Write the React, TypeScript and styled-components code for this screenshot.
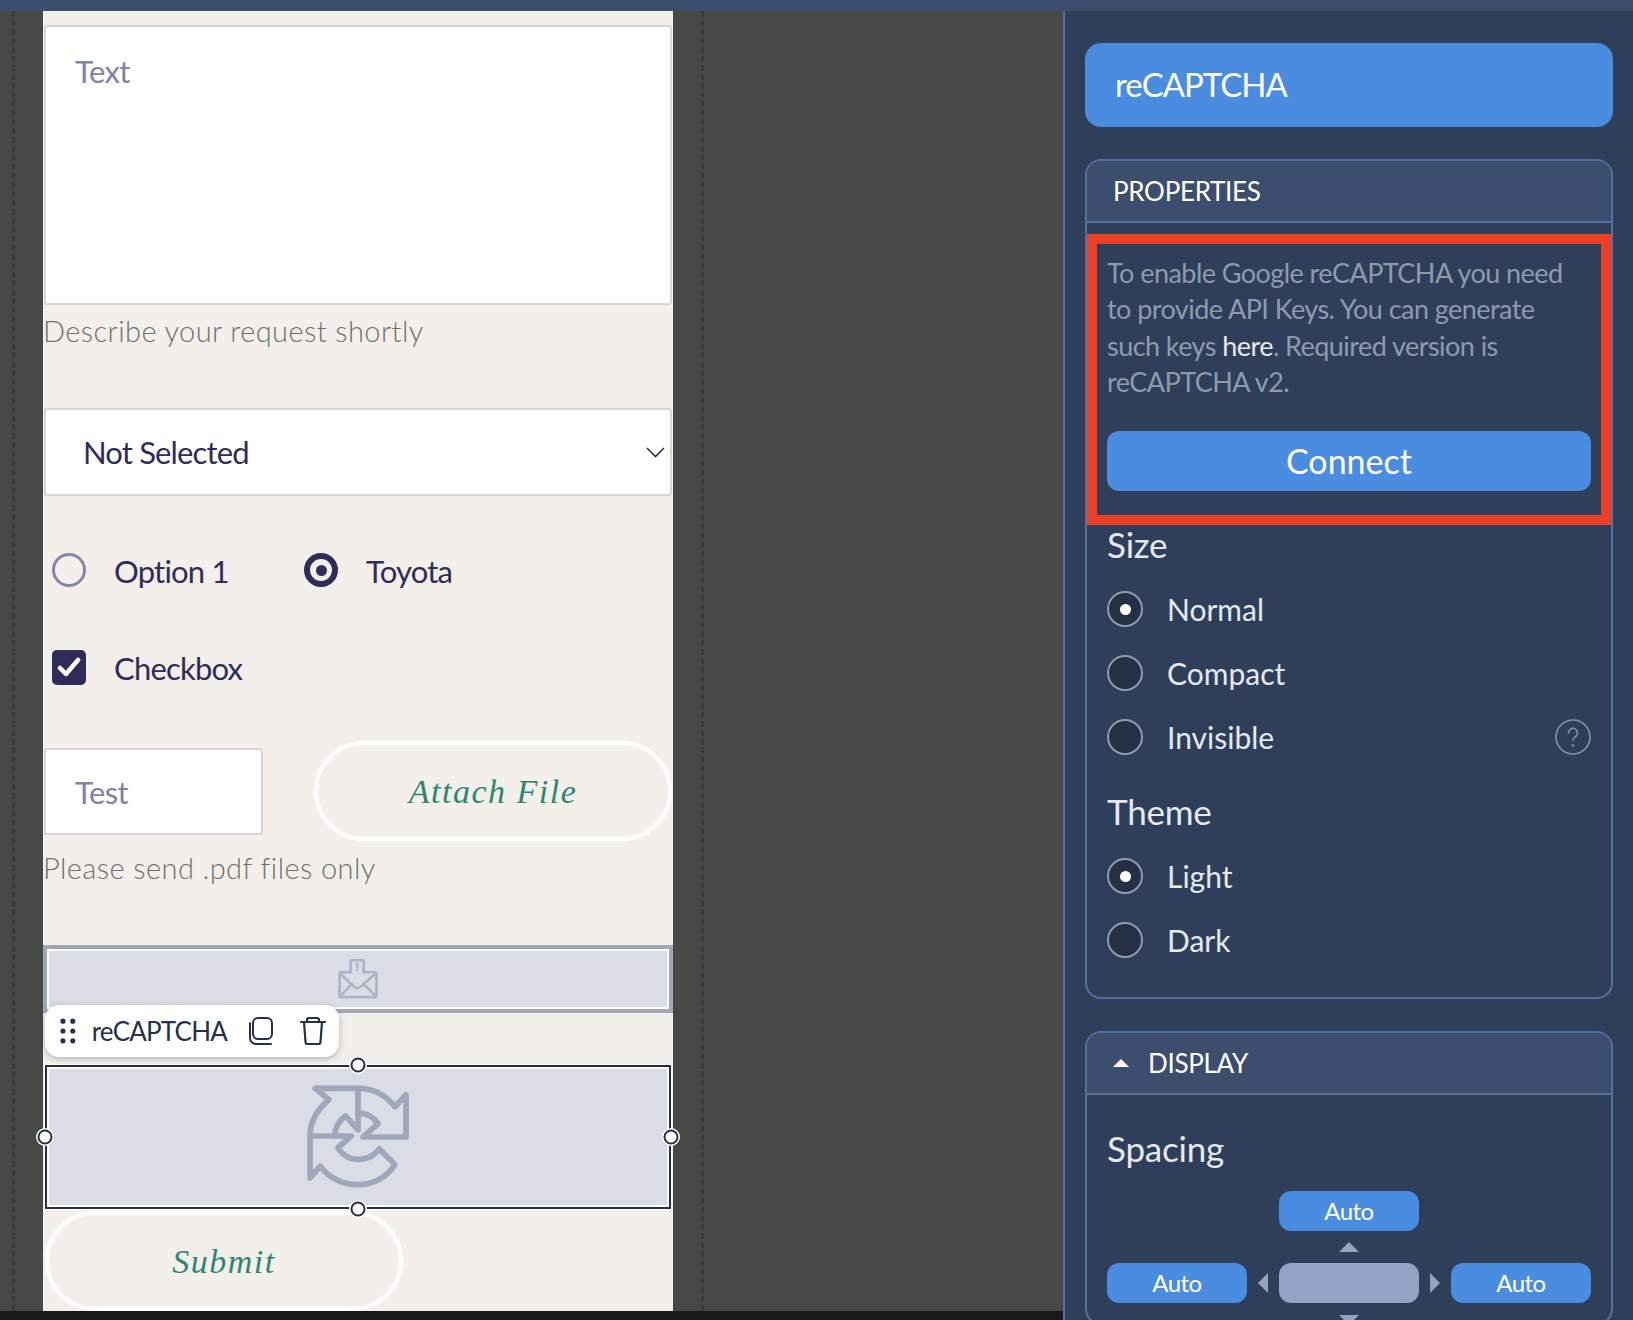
import React from "react";
import styled, { createGlobalStyle } from "styled-components";

const Global = createGlobalStyle`
  html, body { margin: 0; padding: 0; background: #484846; overflow: hidden; }
  * { box-sizing: border-box; }
  body { font-family: "Lato", "Noto Sans", sans-serif; }
`;

const Page = styled.div`
  width: 1633px;
  height: 1320px;
  display: flex;
  flex-direction: column;
  overflow: hidden;
`;
const TopBar = styled.div`
  height: 11px;
  flex: none;
  background: #3d4d6e;
`;
const Main = styled.div`
  flex: 1;
  display: flex;
  min-height: 0;
`;
const Canvas = styled.div`
  width: 1063px;
  flex: none;
  display: flex;
  flex-direction: column;
  background: #484846;
`;
const Frame = styled.div`
  height: 1300px;
  flex: none;
  margin-left: 12px;
  width: 692px;
  border-left: 3px dashed #3a3a39;
  border-right: 3px dashed #3a3a39;
  padding-left: 28px;
`;
const BottomBar = styled.div`
  flex: 1;
  background: #191919;
`;
const Form = styled.div`
  width: 630px;
  height: 1300px;
  background: #f3f0eb;
  display: flex;
  flex-direction: column;
  position: relative;
`;
const TextArea = styled.div`
  margin: 14px 1px 0;
  height: 280px;
  background: #fff;
  border: 2px solid #d5d6d9;
  border-radius: 3px;
  padding: 24px 29px;
  font-size: 31px;
  line-height: 40px;
  letter-spacing: -0.6px;
  color: #8082a8;
`;
const Helper = styled.div<{ $mt: number }>`
  margin-top: ${(p) => p.$mt}px;
  height: 36px;
  font-size: 29px;
  font-weight: 300;
  line-height: 36px;
  letter-spacing: 0.4px;
  color: #70706c;
`;
const SelectBox = styled.div`
  margin: 59px 1px 0;
  height: 88px;
  background: #fff;
  border: 2px solid #d5d6d9;
  border-radius: 3px;
  display: flex;
  align-items: center;
  justify-content: space-between;
  padding: 0 5px 0 37px;
  font-size: 31px;
  letter-spacing: -0.85px;
  color: #2f2c5a;
`;
const ChoiceRow = styled.div<{ $mt: number }>`
  margin-top: ${(p) => p.$mt}px;
  padding-left: 9px;
  display: flex;
  align-items: center;
  height: 34px;
`;
const Choice = styled.div<{ $w?: number }>`
  display: flex;
  align-items: center;
  gap: 28px;
  width: ${(p) => (p.$w ? `${p.$w}px` : "auto")};
  height: 34px;
  font-size: 31px;
  letter-spacing: -0.8px;
  color: #2f2c5a;
`;
const ChoiceLabel = styled.span`
  position: relative;
  top: 1px;
`;
const FormRadio = styled.span<{ $on?: boolean }>`
  width: 34px;
  height: 34px;
  flex: none;
  border-radius: 50%;
  border: ${(p) => (p.$on ? "6px solid #2f2c5a" : "3px solid #8486ac")};
  display: flex;
  align-items: center;
  justify-content: center;
  &::after {
    content: "";
    width: 11px;
    height: 11px;
    border-radius: 50%;
    background: ${(p) => (p.$on ? "#2f2c5a" : "transparent")};
  }
`;
const CheckMark = styled.span`
  width: 34px;
  height: 35px;
  flex: none;
  border-radius: 5px;
  background: #2f2c5a;
  display: flex;
  align-items: center;
  justify-content: center;
`;
const FileRow = styled.div`
  margin: 57px 1px 0;
  height: 100px;
  display: flex;
  align-items: center;
  justify-content: space-between;
`;
const ShortInput = styled.div`
  width: 219px;
  height: 87px;
  background: #fff;
  border: 2px solid #d5d6d9;
  border-radius: 3px;
  padding: 2px 0 0 29px;
  display: flex;
  align-items: center;
  font-size: 31px;
  letter-spacing: -0.6px;
  color: #8082a8;
`;
const PillButton = styled.div<{ $w: number }>`
  width: ${(p) => p.$w}px;
  height: 100px;
  flex: none;
  border: 4px solid #fff;
  border-radius: 50px;
  padding-top: 2px;
  display: flex;
  align-items: center;
  justify-content: center;
  font-family: "Liberation Serif", serif;
  font-style: italic;
  font-size: 34px;
  letter-spacing: 1.5px;
  color: #2f8573;
`;
const EmailBlock = styled.div`
  margin-top: 59px;
  height: 68px;
  background: #dadde6;
  border: 4px solid #a0a7bb;
  box-shadow: inset 0 0 0 2px #fff;
  display: flex;
  align-items: center;
  justify-content: center;
`;
const SelectedWrap = styled.div`
  margin: 52px 0 0 2px;
  width: 626px;
  height: 144px;
  position: relative;
`;
const SelectedBlock = styled.div`
  height: 100%;
  background: #dadde6;
  border: 2px solid #26304a;
  box-shadow: inset 0 0 0 2px #fff, 0 0 0 1px #fff;
  display: flex;
  align-items: center;
  justify-content: center;
`;
const Handle = styled.span<{ $x: string; $y: string }>`
  position: absolute;
  left: ${(p) => p.$x};
  top: ${(p) => p.$y};
  transform: translate(-50%, -50%);
  width: 15px;
  height: 15px;
  border-radius: 50%;
  background: #fff;
  border: 2.5px solid #26304a;
  box-shadow: 0 0 0 1.5px #fff;
`;
const Toolbar = styled.div`
  position: absolute;
  left: 0;
  top: -60px;
  width: 294px;
  height: 52px;
  background: #fff;
  border-radius: 14px;
  box-shadow: 0 2px 6px rgba(30, 35, 50, 0.3);
  display: flex;
  align-items: center;
  padding: 0 12px 0 15px;
  color: #26304a;
  font-size: 26px;
  letter-spacing: -0.8px;
`;
const ToolbarLabel = styled.span`
  margin-left: 16px;
  width: 159px;
`;
const ToolbarIcon = styled.svg`
  flex: none;
  fill: none;
  stroke: #26304a;
  stroke-width: 2;
  stroke-linecap: round;
  stroke-linejoin: round;
`;
const SubmitWrap = styled.div`
  margin: 2px 0 0 2px;
`;

const Side = styled.div`
  flex: 1;
  background: #2f3f5a;
  border-left: 2px solid #5570a0;
  padding: 32px 20px 0 20px;
  display: flex;
  flex-direction: column;
  color: #e4e9f3;
  overflow: hidden;
`;
const TitleBar = styled.div`
  height: 84px;
  flex: none;
  background: #4a8cdf;
  border-radius: 16px;
  color: #fff;
  display: flex;
  align-items: center;
  padding: 0 0 3px 30px;
  font-size: 33px;
  letter-spacing: -1px;
`;
const Section = styled.div<{ $mt: number; $h?: number }>`
  margin-top: ${(p) => p.$mt}px;
  flex: none;
  height: ${(p) => (p.$h ? `${p.$h}px` : "auto")};
  border: 2px solid #5570a0;
  border-radius: 16px;
`;
const SectionHead = styled.div`
  height: 62px;
  background: #3d4d6e;
  border-bottom: 2px solid #5570a0;
  border-radius: 14px 14px 0 0;
  display: flex;
  align-items: center;
  padding: 0 0 0 26px;
  font-size: 26px;
  letter-spacing: -0.3px;
  color: #fff;
`;
const Caret = styled.span`
  width: 0;
  height: 0;
  border-left: 8px solid transparent;
  border-right: 8px solid transparent;
  border-bottom: 8px solid #fff;
  margin: 0 19px 0 0;
`;
const Notice = styled.div`
  margin-top: 11px;
  height: 291px;
  border: 10.5px solid #ec3f27;
  padding: 11px 10px 0 10px;
  display: flex;
  flex-direction: column;
`;
const NoticeText = styled.div`
  max-width: 470px;
  font-size: 27px;
  line-height: 36.3px;
  letter-spacing: -0.55px;
  color: #8c9bae;
`;
const NoticeLink = styled.span`
  color: #e6e9f0;
`;
const ConnectButton = styled.div`
  margin-top: 31px;
  height: 60px;
  padding-bottom: 2px;
  background: #4a8cdf;
  border-radius: 12px;
  color: #fff;
  font-size: 34px;
  display: flex;
  align-items: center;
  justify-content: center;
`;
const Body = styled.div`
  padding: 0 20px;
`;
const GroupLabel = styled.div<{ $mt: number }>`
  margin-top: ${(p) => p.$mt}px;
  height: 42px;
  line-height: 42px;
  font-size: 35px;
  letter-spacing: -0.2px;
  color: #e4e9f3;
`;
const RadioRow = styled.div<{ $mt: number }>`
  margin-top: ${(p) => p.$mt}px;
  height: 36px;
  display: flex;
  align-items: center;
  gap: 24px;
  font-size: 30px;
  line-height: 34px;
  color: #e4e9f3;
`;
const DarkRadio = styled.span<{ $on?: boolean }>`
  width: 36px;
  height: 36px;
  flex: none;
  border-radius: 50%;
  background: #252f45;
  border: 2px solid #8c9bae;
  display: flex;
  align-items: center;
  justify-content: center;
  &::after {
    content: "";
    width: 11px;
    height: 11px;
    border-radius: 50%;
    background: ${(p) => (p.$on ? "#fff" : "transparent")};
  }
`;
const HelpIcon = styled.svg`
  margin-left: auto;
  flex: none;
  fill: none;
  stroke: #7e93b5;
`;
const SpacingGrid = styled.div`
  margin-top: 22px;
  display: grid;
  grid-template-columns: 140px 32px 140px 32px 140px;
  grid-template-rows: 40px 32px 40px 20px;
  justify-items: center;
  align-items: center;
`;
const AutoChip = styled.div<{ $col: number; $row: number; $muted?: boolean }>`
  grid-column: ${(p) => p.$col};
  grid-row: ${(p) => p.$row};
  width: 140px;
  height: 40px;
  border-radius: 12px;
  padding-bottom: 2px;
  background: ${(p) => (p.$muted ? "#93a3c3" : "#4a8cdf")};
  color: #fff;
  font-size: 24px;
  letter-spacing: -0.5px;
  display: flex;
  align-items: center;
  justify-content: center;
`;
const Arrow = styled.span<{ $col: number; $row: number; $dir: "up" | "down" | "left" | "right" }>`
  grid-column: ${(p) => p.$col};
  grid-row: ${(p) => p.$row};
  width: 0;
  height: 0;
  ${(p) =>
    p.$dir === "up" || p.$dir === "down"
      ? `border-left: 10px solid transparent; border-right: 10px solid transparent;`
      : `border-top: 10px solid transparent; border-bottom: 10px solid transparent;`}
  ${(p) => p.$dir === "up" && `border-bottom: 10px solid #93a3c3;`}
  ${(p) => p.$dir === "down" && `border-top: 10px solid #93a3c3; align-self: start; margin-top: 12px;`}
  ${(p) => p.$dir === "left" && `border-right: 10px solid #93a3c3;`}
  ${(p) => p.$dir === "right" && `border-left: 10px solid #93a3c3;`}
`;

const EnvelopeIcon = () => (
  <svg width="42" height="42" viewBox="170 55 130 128" fill="none" stroke="#aeb4c7" strokeWidth="8" strokeLinecap="round" strokeLinejoin="round">
    <path d="M212 98H182a4 4 0 0 0-4 4v69a4 4 0 0 0 4 4h106a4 4 0 0 0 4-4v-69a4 4 0 0 0-4-4h-35" />
    <path d="M212 98V66a5 5 0 0 1 5-5h31a5 5 0 0 1 5 5v32" />
    <path d="M180 102l44 42q9 7 18 0l48-42" />
    <path d="M180 172l36-37M290 172l-37-37" />
    <path d="M233 69v15M233 92v1" strokeWidth="7" />
  </svg>
);

const RecaptchaIcon = () => (
  <svg width="104" height="106" viewBox="80 435 310 316" fill="none" stroke="#a0a7bb" strokeWidth="17" strokeLinecap="round" strokeLinejoin="round">
    <path d="M108 448H235C280 448 318 468 345 503L378 467V593H250L295 553C280 532 258 522 235 522" />
    <path d="M235 448V572L198 530C178 545 166 565 165 590" />
    <path d="M108 448L148 482C115 510 92 548 92 590V715L122 680C148 715 190 735 235 735C282 735 322 712 345 675L298 628C285 648 262 660 235 660C212 660 190 648 175 625L215 590H92" />
  </svg>
);

const Dots = () => (
  <svg width="16" height="26" viewBox="0 0 16 26" fill="#26304a">
    <circle cx="3" cy="3" r="2.6" /><circle cx="13" cy="3" r="2.6" />
    <circle cx="3" cy="13" r="2.6" /><circle cx="13" cy="13" r="2.6" />
    <circle cx="3" cy="23" r="2.6" /><circle cx="13" cy="23" r="2.6" />
  </svg>
);

const CopyIcon = () => (
  <ToolbarIcon width="26" height="30" viewBox="0 0 26 30" style={{ marginRight: 25 }}>
    <rect x="5" y="2" width="19" height="21" rx="5" strokeWidth="2" />
    <path d="M2 7v15a6 6 0 0 0 6 6h15" strokeWidth="2" />
  </ToolbarIcon>
);

const TrashIcon = () => (
  <ToolbarIcon width="28" height="30" viewBox="0 0 28 30">
    <path d="M2 6h24M8 6V4a2 2 0 0 1 2-2h8a2 2 0 0 1 2 2v2M5 6l1.5 20a2 2 0 0 0 2 2h11a2 2 0 0 0 2-2L23 6" strokeWidth="2.2" />
  </ToolbarIcon>
);

const Radio = ({ on, label, mt, help }: { on?: boolean; label: string; mt: number; help?: boolean }) => (
  <RadioRow $mt={mt}>
    <DarkRadio $on={on} />
    {label}
    {help && (
      <HelpIcon width="36" height="36" viewBox="0 0 36 36">
        <circle cx="18" cy="18" r="17" strokeWidth="1.6" />
        <path d="M13.5 14a4.5 4.5 0 1 1 7 3.6c-1.6 1.1-2.5 2-2.5 4" strokeWidth="1.6" strokeLinecap="round" />
        <circle cx="18" cy="26.5" r="1.3" fill="#7e93b5" stroke="none" />
      </HelpIcon>
    )}
  </RadioRow>
);

export default function App() {
  return (
    <Page>
      <Global />
      <TopBar />
      <Main>
        <Canvas>
          <Frame>
            <Form>
              <TextArea>Text</TextArea>
              <Helper $mt={8}>Describe your request shortly</Helper>
              <SelectBox>
                Not Selected
                <svg width="19" height="11" viewBox="0 0 19 11" fill="none" stroke="#2f2c5a" strokeWidth="1.6">
                  <path d="M1 1l8.5 8.5L18 1" />
                </svg>
              </SelectBox>
              <ChoiceRow $mt={57}>
                <Choice $w={252}>
                  <FormRadio />
                  <ChoiceLabel>Option 1</ChoiceLabel>
                </Choice>
                <Choice>
                  <FormRadio $on />
                  <ChoiceLabel>Toyota</ChoiceLabel>
                </Choice>
              </ChoiceRow>
              <ChoiceRow $mt={63}>
                <Choice>
                  <CheckMark>
                    <svg width="24" height="22" viewBox="0 0 24 22" fill="none" stroke="#fff" strokeWidth="4.5" strokeLinecap="round" strokeLinejoin="round">
                      <path d="M3 12l6 6L21 4" />
                    </svg>
                  </CheckMark>
                  <ChoiceLabel>Checkbox</ChoiceLabel>
                </Choice>
              </ChoiceRow>
              <FileRow>
                <ShortInput>Test</ShortInput>
                <PillButton $w={358}>Attach File</PillButton>
              </FileRow>
              <Helper $mt={9}>Please send .pdf files only</Helper>
              <EmailBlock>
                <EnvelopeIcon />
              </EmailBlock>
              <SelectedWrap>
                <Toolbar>
                  <Dots />
                  <ToolbarLabel>reCAPTCHA</ToolbarLabel>
                  <CopyIcon />
                  <TrashIcon />
                </Toolbar>
                <SelectedBlock>
                  <RecaptchaIcon />
                </SelectedBlock>
                <Handle $x="50%" $y="0" />
                <Handle $x="50%" $y="100%" />
                <Handle $x="0" $y="50%" />
                <Handle $x="100%" $y="50%" />
              </SelectedWrap>
              <SubmitWrap>
                <PillButton $w={358}>Submit</PillButton>
              </SubmitWrap>
            </Form>
          </Frame>
          <BottomBar />
        </Canvas>
        <Side>
          <TitleBar>reCAPTCHA</TitleBar>
          <Section $mt={32} $h={840}>
            <SectionHead>PROPERTIES</SectionHead>
            <Notice>
              <NoticeText>
                To enable Google reCAPTCHA you need to provide API Keys. You can generate such keys{" "}
                <NoticeLink>here</NoticeLink>. Required version is reCAPTCHA v2.
              </NoticeText>
              <ConnectButton>Connect</ConnectButton>
            </Notice>
            <Body>
              <GroupLabel $mt={-2}>Size</GroupLabel>
              <Radio on label="Normal" mt={26} />
              <Radio label="Compact" mt={28} />
              <Radio label="Invisible" mt={28} help />
              <GroupLabel $mt={35}>Theme</GroupLabel>
              <Radio on label="Light" mt={26} />
              <Radio label="Dark" mt={28} />
            </Body>
          </Section>
          <Section $mt={32}>
            <SectionHead>
              <Caret />
              DISPLAY
            </SectionHead>
            <Body>
              <GroupLabel $mt={32}>Spacing</GroupLabel>
              <SpacingGrid>
                <AutoChip $col={3} $row={1}>Auto</AutoChip>
                <Arrow $col={3} $row={2} $dir="up" />
                <AutoChip $col={1} $row={3}>Auto</AutoChip>
                <Arrow $col={2} $row={3} $dir="left" />
                <AutoChip $col={3} $row={3} $muted />
                <Arrow $col={4} $row={3} $dir="right" />
                <AutoChip $col={5} $row={3}>Auto</AutoChip>
                <Arrow $col={3} $row={4} $dir="down" />
              </SpacingGrid>
            </Body>
          </Section>
        </Side>
      </Main>
    </Page>
  );
}
